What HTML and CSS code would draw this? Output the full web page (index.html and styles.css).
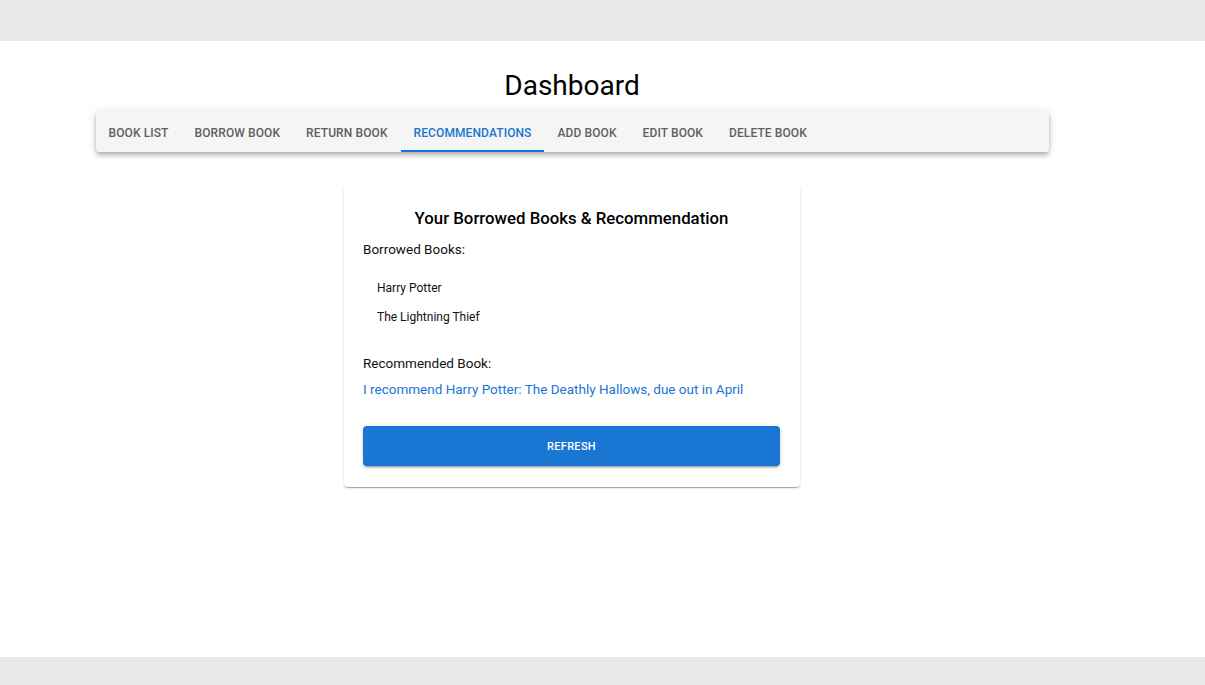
FILE: index.html
```html
<!DOCTYPE html>
<html lang="en">
<head>
<meta charset="utf-8">
<title>Dashboard</title>
<link rel="stylesheet" href="styles.css">
</head>
<body>
<div class="topbar"></div>
<main class="main">
  <div class="wrap">
    <h1 class="title">Dashboard</h1>
    <nav class="tabs">
      <a class="tab">Book List</a>
      <a class="tab">Borrow Book</a>
      <a class="tab">Return Book</a>
      <a class="tab active">Recommendations</a>
      <a class="tab">Add Book</a>
      <a class="tab">Edit Book</a>
      <a class="tab">Delete Book</a>
    </nav>
    <section class="card">
      <h2 class="card-title">Your Borrowed Books &amp; Recommendation</h2>
      <p class="label">Borrowed Books:</p>
      <ul class="list">
        <li class="item">Harry Potter</li>
        <li class="item">The Lightning Thief</li>
      </ul>
      <p class="label label-rec">Recommended Book:</p>
      <p class="rec">I recommend Harry Potter: The Deathly Hallows, due out in April</p>
      <button class="btn">Refresh</button>
    </section>
  </div>
</main>
<div class="bottombar"></div>
</body>
</html>
```
FILE: styles.css
```css
* { box-sizing: border-box; }
html, body { margin: 0; padding: 0; }
body {
  font-family: Roboto, "Liberation Sans", Arial, sans-serif;
  color: #000;
  background: #fff;
}
.topbar { height: 41px; background: #e9e9e9; }
.bottombar { height: 28px; background: #e9e9e9; }
.main { height: 616px; background: #fff; }
.wrap {
  width: 1144px;
  display: flex;
  flex-direction: column;
  align-items: center;
  padding-top: 28px;
}
.title {
  margin: 0;
  font-size: 28px;
  line-height: 34px;
  font-weight: 400;
  color: #000;
}
.tabs {
  margin-top: 8px;
  width: 953px;
  height: 41px;
  background: #f5f5f5;
  display: flex;
  border-radius: 3px;
  box-shadow: 0 2px 4px -1px rgba(0,0,0,0.2), 0 4px 5px 0 rgba(0,0,0,0.14), 0 1px 10px 0 rgba(0,0,0,0.12);
}
.tab {
  display: flex;
  align-items: center;
  padding: 0 13px;
  font-size: 12px;
  font-weight: 500;
  text-transform: uppercase;
  color: #5f5f5f;
  letter-spacing: 0.1px;
  border-bottom: 2px solid transparent;
  padding-top: 4px;
}
.tab.active {
  color: #1976d2;
  border-bottom-color: #1976d2;
}
.card {
  margin-top: 33px;
  width: 456px;
  padding: 20px 20px 21px 19px;
  background: #fff;
  border-radius: 4px;
  box-shadow: 0 2px 1px -1px rgba(0,0,0,0.2), 0 1px 1px 0 rgba(0,0,0,0.14), 0 1px 3px 0 rgba(0,0,0,0.12);
  display: flex;
  flex-direction: column;
}
.card-title {
  margin: 2px 0 0;
  font-size: 16.8px;
  line-height: 22px;
  font-weight: 500;
  text-align: center;
}
.label {
  margin: 10px 0 0;
  font-size: 13.5px;
  line-height: 20px;
  color: #111;
}
.list {
  list-style: none;
  margin: 14.5px 0 0;
  padding: 0;
}
.item {
  padding-left: 14px;
  font-size: 12px;
  line-height: 29px;
  color: #111;
}
.label-rec { margin-top: 21.5px; }
.rec {
  margin: 6px 0 0;
  font-size: 13.5px;
  line-height: 20px;
  color: #1976d2;
}
.btn {
  margin-top: 27px;
  height: 40px;
  width: 100%;
  border: 0;
  border-radius: 4px;
  background: #1976d2;
  color: #fff;
  font-family: inherit;
  font-size: 11px;
  font-weight: 500;
  text-transform: uppercase;
  letter-spacing: 0.3px;
  box-shadow: 0 3px 1px -2px rgba(0,0,0,0.2), 0 2px 2px 0 rgba(0,0,0,0.14), 0 1px 5px 0 rgba(0,0,0,0.12);
}
```
